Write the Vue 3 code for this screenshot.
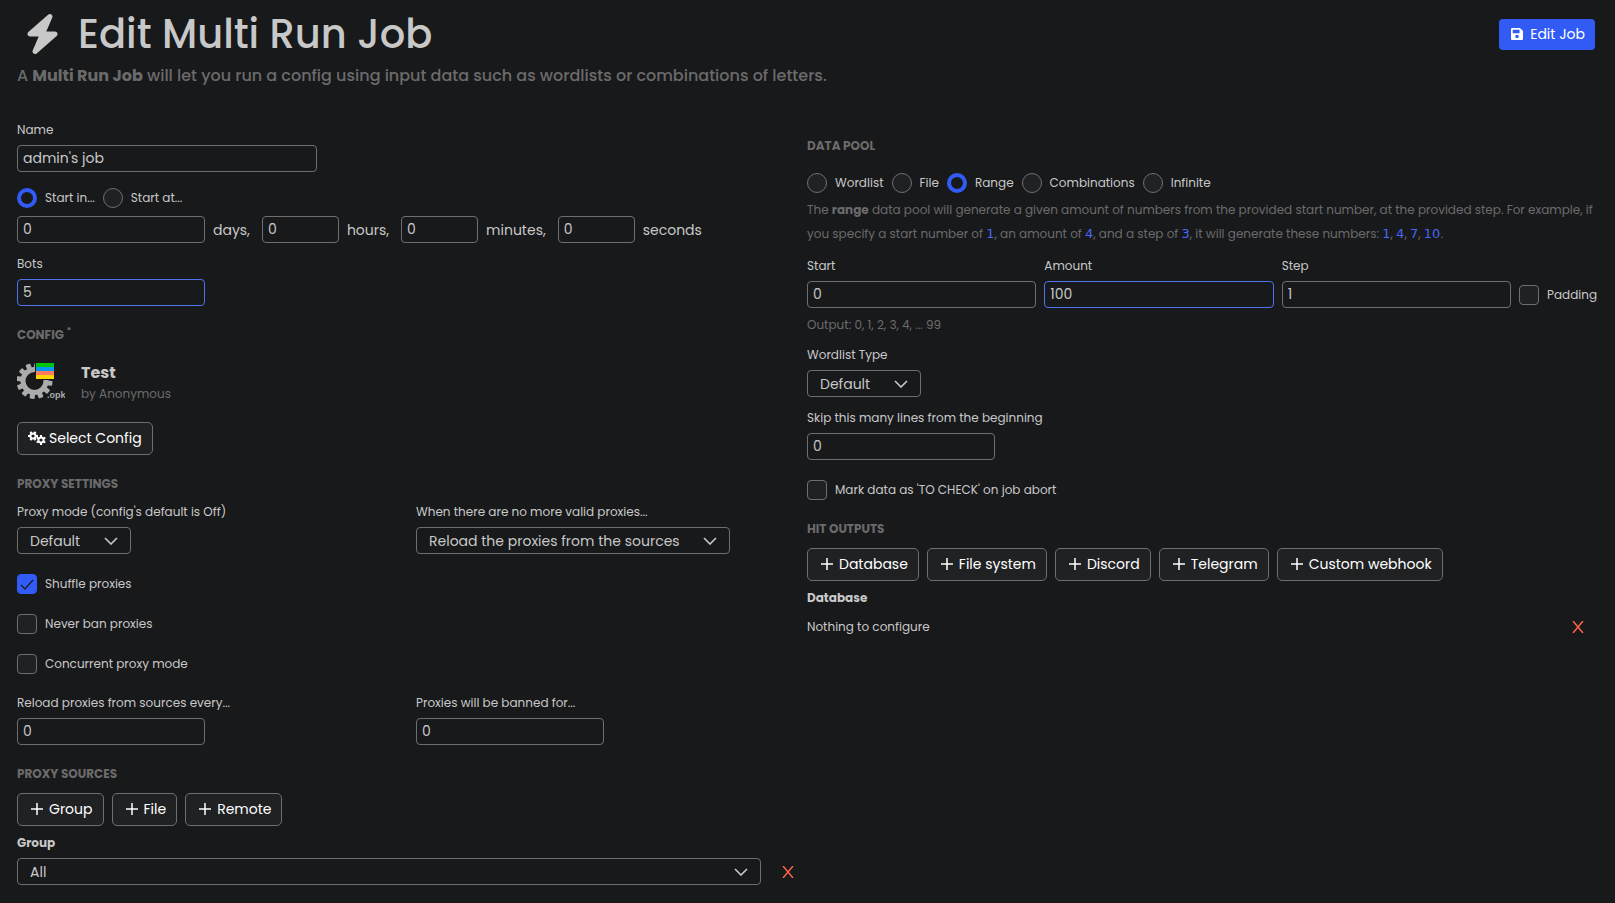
<template>
  <div class="page">
    <header class="page-header">
      <div>
        <h1>
          <svg class="bolt" viewBox="0 0 448 512" aria-hidden="true">
            <path d="M349.4 44.6c5.9-13.7 1.5-29.7-10.6-38.5s-28.6-8-39.9 1.8l-256 224C32.4 241 28.9 254.5 33.8 266.3S51.2 288 64 288h111.5L98.6 467.4c-5.9 13.7-1.5 29.7 10.6 38.5s28.6 8 39.9-1.8l256-224c10.9-9.3 14.3-22.8 9.4-34.6S396.8 224 384 224H272.5L349.4 44.6z" />
          </svg>
          <span>Edit Multi Run Job</span>
        </h1>
        <p class="subtitle">
          A <strong>Multi Run Job</strong> will let you run a config using input data such as wordlists or combinations of letters.
        </p>
      </div>
      <button class="btn-primary" type="button">
        <svg viewBox="0 32 448 448" aria-hidden="true">
          <path d="M433.941 129.941l-83.882-83.882A48 48 0 0 0 316.118 32H48C21.49 32 0 53.49 0 80v352c0 26.51 21.49 48 48 48h352c26.51 0 48-21.49 48-48V163.882a48 48 0 0 0-14.059-33.941zM224 416c-35.346 0-64-28.654-64-64 0-35.346 28.654-64 64-64s64 28.654 64 64c0 35.346-28.654 64-64 64zm96-304.52V212c0 6.627-5.373 12-12 12H76c-6.627 0-12-5.373-12-12V108c0-6.627 5.373-12 12-12h228.52c3.183 0 6.235 1.264 8.485 3.515l3.48 3.48A11.996 11.996 0 0 1 320 111.48z" />
        </svg>
        <span>Edit Job</span>
      </button>
    </header>

    <main class="columns">
      <div class="column">
        <div class="field">
          <label for="name">Name</label>
          <input id="name" v-model="job.name" class="text name" type="text">
        </div>

        <div class="radios start-mode">
          <label v-for="mode in startModes" :key="mode.value" class="option">
            <input v-model="job.startMode" type="radio" name="start-mode" :value="mode.value">
            <span>{{ mode.label }}</span>
          </label>
        </div>

        <div class="timespan">
          <input id="days" v-model="job.days" class="text medium" type="text">
          <label for="days">days,</label>
          <input id="hours" v-model="job.hours" class="text small" type="text">
          <label for="hours">hours,</label>
          <input id="minutes" v-model="job.minutes" class="text small" type="text">
          <label for="minutes">minutes,</label>
          <input id="seconds" v-model="job.seconds" class="text small" type="text">
          <label for="seconds">seconds</label>
        </div>

        <div class="field spaced">
          <label for="bots">Bots</label>
          <input id="bots" v-model="job.bots" class="text medium edited" type="text">
        </div>

        <h2>Config <sup>*</sup></h2>
        <div class="config">
          <svg class="config-icon" viewBox="0 0 48 39" aria-hidden="true">
            <g fill="#ababab">
              <rect v-for="n in 12" :key="n" x="15" y="1" width="5" height="7" rx="1" :transform="`rotate(${n * 30 + 8} 17.5 19)`" />
            </g>
            <circle cx="17.5" cy="19" r="11.5" fill="none" stroke="#ababab" stroke-width="5" />
            <path fill="#18191b" d="M18 0h20v18H18z" />
            <path fill="#00c40a" d="M19 1h18v4H19z" />
            <path fill="#0098f0" d="M19 5h18v4H19z" />
            <path fill="#ff7a62" d="M19 9h18v4H19z" />
            <path fill="#ffd400" d="M19 13h18v4H19z" />
            <text x="30" y="36" fill="#ababab">.opk</text>
          </svg>
          <div>
            <div class="config-name">Test</div>
            <div class="config-author">by Anonymous</div>
          </div>
        </div>
        <button class="btn select-config" type="button">
          <svg class="cogs" viewBox="0 0 18 14" aria-hidden="true">
            <g v-for="cog in cogs" :key="cog.x" fill="#fff">
              <rect v-for="n in 6" :key="n" :x="cog.x - 1" :y="cog.y - 5" width="2" height="3" :transform="`rotate(${n * 60 + cog.angle} ${cog.x} ${cog.y})`" />
              <circle :cx="cog.x" :cy="cog.y" r="2.6" fill="none" stroke="#fff" stroke-width="2" />
            </g>
          </svg>
          <span>Select Config</span>
        </button>

        <h2>Proxy settings</h2>
        <div class="pair">
          <div class="field">
            <label for="proxy-mode">Proxy mode (config's default is Off)</label>
            <div class="select mode">
              <select id="proxy-mode"><option>Default</option></select>
              <svg viewBox="0 0 14 8" aria-hidden="true"><path d="M1 1l6 6 6-6" /></svg>
            </div>
          </div>
          <div class="field">
            <label for="no-proxies">When there are no more valid proxies...</label>
            <div class="select behaviour">
              <select id="no-proxies"><option>Reload the proxies from the sources</option></select>
              <svg viewBox="0 0 14 8" aria-hidden="true"><path d="M1 1l6 6 6-6" /></svg>
            </div>
          </div>
        </div>

        <div class="checks">
          <label v-for="check in proxyChecks" :key="check.label" class="option">
            <span class="box">
              <input v-model="check.value" type="checkbox">
              <svg v-if="check.value" viewBox="0 0 20 20" aria-hidden="true"><path d="M4 11l4 4 8-9" /></svg>
            </span>
            <span>{{ check.label }}</span>
          </label>
        </div>

        <div class="pair periods">
          <div class="field">
            <label for="reload-every">Reload proxies from sources every...</label>
            <input id="reload-every" v-model="job.reloadEvery" class="text medium" type="text">
          </div>
          <div class="field">
            <label for="ban-time">Proxies will be banned for...</label>
            <input id="ban-time" v-model="job.banTime" class="text medium" type="text">
          </div>
        </div>

        <h2>Proxy sources</h2>
        <div class="buttons">
          <button v-for="source in proxySources" :key="source" class="btn" type="button">
            <svg class="plus" viewBox="0 0 12 12" aria-hidden="true"><path d="M6 0v12M0 6h12" /></svg>
            <span>{{ source }}</span>
          </button>
        </div>
        <label class="item-title" for="group">Group</label>
        <div class="item">
          <div class="select">
            <select id="group"><option>All</option></select>
            <svg viewBox="0 0 14 8" aria-hidden="true"><path d="M1 1l6 6 6-6" /></svg>
          </div>
          <button class="remove" type="button" aria-label="Remove group">
            <svg viewBox="0 0 12 12" aria-hidden="true"><path d="M1 0l10 12M11 0L1 12" /></svg>
          </button>
        </div>
      </div>

      <div class="column right">
        <h2>Data pool</h2>
        <div class="radios pool">
          <label v-for="pool in pools" :key="pool" class="option">
            <input v-model="job.pool" type="radio" name="pool" :value="pool">
            <span>{{ pool }}</span>
          </label>
        </div>
        <p class="hint">
          The <strong>range</strong> data pool will generate a given amount of numbers from the provided start number, at the provided step. For example, if you specify a start number of <code>1</code>, an amount of <code>4</code>, and a step of <code>3</code>, it will generate these numbers: <code>1</code>, <code>4</code>, <code>7</code>, <code>10</code>.
        </p>

        <div class="range">
          <div class="field">
            <label for="start">Start</label>
            <input id="start" v-model="job.start" class="text" type="text">
          </div>
          <div class="field">
            <label for="amount">Amount</label>
            <input id="amount" v-model="job.amount" class="text edited" type="text">
          </div>
          <div class="field">
            <label for="step">Step</label>
            <input id="step" v-model="job.step" class="text" type="text">
          </div>
          <label class="option padding">
            <span class="box"><input v-model="job.padding" type="checkbox"></span>
            <span>Padding</span>
          </label>
        </div>
        <p class="output">Output: 0, 1, 2, 3, 4, ... 99</p>

        <div class="field wordlist-type">
          <label for="wordlist-type">Wordlist Type</label>
          <div class="select mode">
            <select id="wordlist-type"><option>Default</option></select>
            <svg viewBox="0 0 14 8" aria-hidden="true"><path d="M1 1l6 6 6-6" /></svg>
          </div>
        </div>

        <div class="field spaced">
          <label for="skip">Skip this many lines from the beginning</label>
          <input id="skip" v-model="job.skip" class="text medium" type="text">
        </div>

        <div class="checks">
          <label class="option">
            <span class="box"><input v-model="job.markAsToCheck" type="checkbox"></span>
            <span>Mark data as 'TO CHECK' on job abort</span>
          </label>
        </div>

        <h2>Hit outputs</h2>
        <div class="buttons">
          <button v-for="output in hitOutputs" :key="output" class="btn" type="button">
            <svg class="plus" viewBox="0 0 12 12" aria-hidden="true"><path d="M6 0v12M0 6h12" /></svg>
            <span>{{ output }}</span>
          </button>
        </div>
        <div class="item-title">Database</div>
        <div class="item">
          <span class="nothing">Nothing to configure</span>
          <button class="remove" type="button" aria-label="Remove database output">
            <svg viewBox="0 0 12 12" aria-hidden="true"><path d="M1 0l10 12M11 0L1 12" /></svg>
          </button>
        </div>
      </div>
    </main>
  </div>
</template>

<script setup>
import { reactive } from 'vue'

const job = reactive({
  name: "admin's job",
  startMode: 'in',
  days: '0',
  hours: '0',
  minutes: '0',
  seconds: '0',
  bots: '5',
  reloadEvery: '0',
  banTime: '0',
  pool: 'Range',
  start: '0',
  amount: '100',
  step: '1',
  padding: false,
  skip: '0',
  markAsToCheck: false
})

const startModes = [
  { value: 'in', label: 'Start in...' },
  { value: 'at', label: 'Start at...' }
]

const proxyChecks = reactive([
  { label: 'Shuffle proxies', value: true },
  { label: 'Never ban proxies', value: false },
  { label: 'Concurrent proxy mode', value: false }
])

const cogs = [
  { x: 5, y: 5, angle: 30 },
  { x: 13, y: 9, angle: 0 }
]

const pools = ['Wordlist', 'File', 'Range', 'Combinations', 'Infinite']
const proxySources = ['Group', 'File', 'Remote']
const hitOutputs = ['Database', 'File system', 'Discord', 'Telegram', 'Custom webhook']
</script>

<style>
body {
  background: #18191b;
}
</style>

<style scoped>
.page {
  padding: 10px 18px 18px 17px;
  color: #c8c8c8;
  font-family: Poppins, Inter, sans-serif;
  font-size: 12px;
  line-height: 20px;
}

.page * {
  box-sizing: border-box;
}

input,
select,
button {
  margin: 0;
  color: inherit;
  font: inherit;
}

/* Header */
.page-header {
  display: flex;
  align-items: flex-start;
  justify-content: space-between;
  margin-bottom: 32px;
}

h1 {
  display: flex;
  align-items: center;
  gap: 18px;
  margin: 0;
  padding-left: 8px;
  font-size: 40px;
  font-weight: 500;
  line-height: 48px;
}

.bolt {
  width: 35px;
  height: 40px;
  fill: currentColor;
}

.subtitle {
  margin: 6px 0 0;
  color: #6b6b6b;
  font-size: 16px;
  font-weight: 500;
  line-height: 24px;
}

.btn-primary {
  display: flex;
  align-items: center;
  gap: 7px;
  height: 31px;
  margin: 9px 2px 0 0;
  padding: 0 10px 2px 12px;
  background: #325bf6;
  border: none;
  border-radius: 4px;
  color: #fff;
  font-size: 14px;
}

.btn-primary svg {
  width: 12px;
  height: 12px;
  fill: #fff;
}

/* Layout */
.columns {
  display: grid;
  grid-template-columns: 1fr 1fr;
}

.right {
  padding-top: 16px;
}

h2 {
  margin: 19px 0 0;
  color: #6b6b6b;
  font-size: 12px;
  font-weight: 700;
  line-height: 20px;
  text-transform: uppercase;
}

.right > h2:first-child {
  margin-top: 0;
}

h2 sup {
  font-size: 9px;
  line-height: 0;
}

.pair {
  display: grid;
  grid-template-columns: 1fr 1fr;
  gap: 8px;
  margin-top: 8px;
}

.pair.periods {
  margin-top: 19px;
}

/* Fields */
.field {
  display: flex;
  flex-direction: column;
  align-items: flex-start;
  gap: 5px;
}

.field.spaced {
  margin-top: 11px;
}

.text {
  width: 100%;
  height: 27px;
  padding: 0 5px;
  background: transparent;
  border: 1px solid #6f6f70;
  border-radius: 4px;
  outline: none;
  font-size: 14px;
}

.text.name {
  width: 300px;
}

.text.medium {
  width: 188px;
}

.text.small {
  width: 77px;
}

.text.edited {
  border-color: #4f72ea;
}

.select {
  position: relative;
  width: 100%;
}

.select.mode {
  width: 114px;
}

.select.behaviour {
  width: 314px;
}

.select select {
  display: block;
  width: 100%;
  height: 27px;
  padding: 0 32px 0 12px;
  appearance: none;
  background: transparent;
  border: 1px solid #6f6f70;
  border-radius: 4px;
  font-size: 14px;
}

.select svg {
  position: absolute;
  top: 10px;
  right: 13px;
  width: 14px;
  height: 8px;
  fill: none;
  stroke: #c8c8c8;
  stroke-width: 1.6;
  pointer-events: none;
}

.option {
  display: flex;
  align-items: center;
  gap: 8px;
}

.option input {
  display: block;
  width: 20px;
  height: 20px;
  appearance: none;
  background: #202123;
  border: 1px solid #6f6f70;
  border-radius: 4px;
}

.option input[type="radio"] {
  border-radius: 50%;
}

.option input[type="radio"]:checked {
  background: transparent;
  border: 4px solid #325bf6;
}

.option input[type="checkbox"]:checked {
  background: #325bf6;
  border-color: #325bf6;
}

.box {
  position: relative;
}

.box svg {
  position: absolute;
  inset: 0;
  fill: none;
  stroke: #18191b;
  stroke-width: 1.2;
  pointer-events: none;
}

.radios {
  display: flex;
  gap: 8px;
}

.start-mode {
  margin-top: 16px;
}

.pool {
  margin-top: 17px;
}

.checks {
  display: flex;
  flex-direction: column;
  align-items: flex-start;
  gap: 20px;
  margin-top: 20px;
}

.timespan {
  display: flex;
  align-items: center;
  gap: 8px;
  margin-top: 8px;
  font-size: 14px;
}

.timespan label:not(:last-child) {
  margin-right: 4px;
}

/* Config */
.config {
  display: flex;
  gap: 16px;
  margin-top: 17px;
}

.config-icon {
  width: 48px;
  height: 39px;
}

.config-icon text {
  font-family: "Liberation Sans", sans-serif;
  font-size: 9px;
  font-weight: 700;
}

.config-name {
  font-size: 16px;
  font-weight: 700;
  line-height: 22px;
}

.config-author {
  color: #6b6b6b;
}

/* Buttons */
.btn {
  display: flex;
  align-items: center;
  gap: 6px;
  height: 33px;
  padding: 0 10px 2px 13px;
  background: #202123;
  border: 1px solid #6f6f70;
  border-radius: 5px;
  color: #fff;
  font-size: 14px;
}

.btn.select-config {
  gap: 3px;
  margin-top: 18px;
  padding-left: 10px;
}

.cogs {
  width: 18px;
  height: 14px;
}

.plus {
  width: 12px;
  height: 12px;
  stroke: #fff;
  stroke-width: 1.5;
}

.buttons {
  display: flex;
  gap: 8px;
  margin-top: 9px;
}

.item-title {
  display: block;
  margin-top: 7px;
  font-weight: 700;
}

.item {
  display: flex;
  align-items: center;
  gap: 8px;
  margin-top: 5px;
}

.nothing {
  flex: 1;
}

.remove {
  display: flex;
  flex: none;
  align-items: center;
  justify-content: center;
  width: 38px;
  height: 27px;
  padding: 0;
  background: none;
  border: none;
}

.remove svg {
  width: 12px;
  height: 12px;
  stroke: #ff6347;
  stroke-width: 1.5;
}

/* Data pool */
.hint {
  margin: 5px 0 0;
  color: #6b6b6b;
  line-height: 24px;
}

.hint code {
  color: #4767f5;
  font-family: "DejaVu Sans", sans-serif;
  font-size: 13px;
  line-height: 16px;
}

.range {
  display: flex;
  align-items: flex-end;
  gap: 8px;
  margin-top: 10px;
}

.range .field {
  flex: 1;
}

.range .padding {
  height: 27px;
}

.output {
  margin: 7px 0 0;
  color: #6b6b6b;
}

.wordlist-type {
  margin-top: 10px;
}
</style>
